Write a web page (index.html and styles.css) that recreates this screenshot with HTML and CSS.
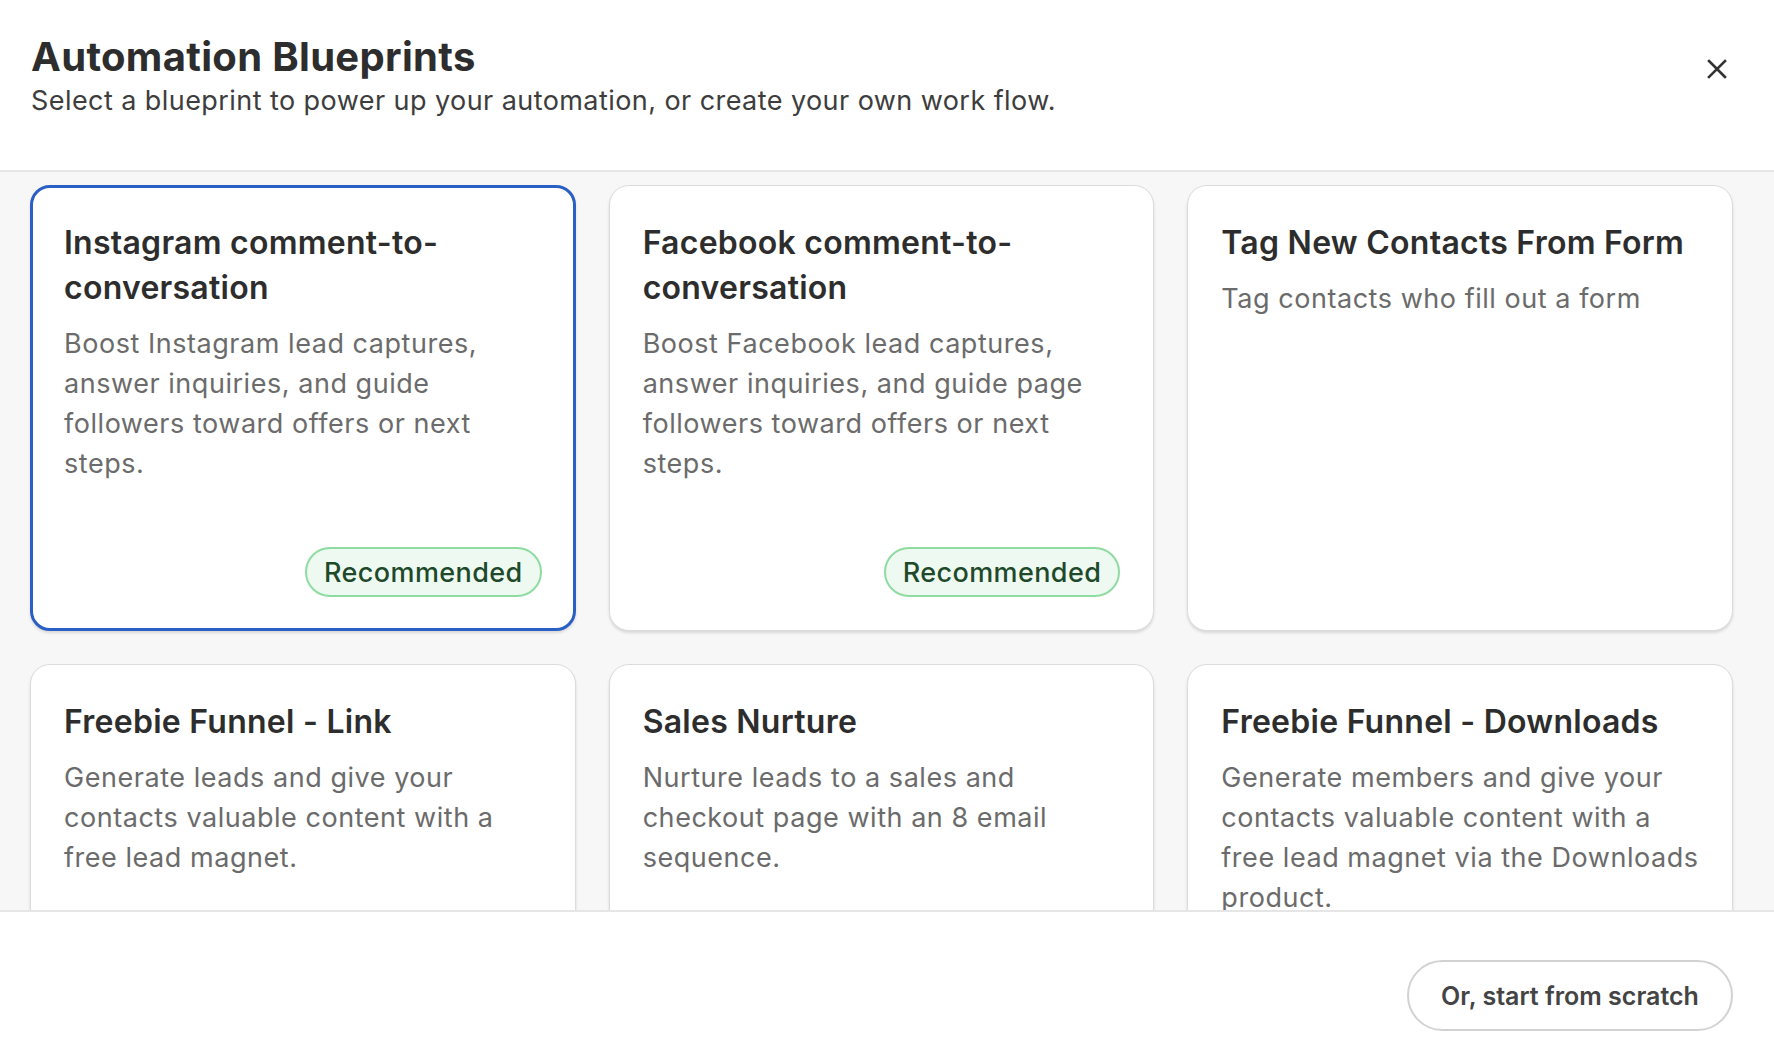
FILE: index.html
```html
<!DOCTYPE html>
<html lang="en">
<head>
<meta charset="utf-8">
<title>Automation Blueprints</title>
<link rel="stylesheet" href="styles.css">
</head>
<body>
<div class="modal">
  <header class="modal-header">
    <div class="heading">
      <h1 class="title">Automation Blueprints</h1>
      <p class="subtitle">Select a blueprint to power up your automation, or create your own work flow.</p>
    </div>
    <button class="close" aria-label="Close">
      <svg width="20" height="20" viewBox="0 0 20 20"><path d="M2 2 L18 18 M18 2 L2 18" stroke="#333" stroke-width="2.6" stroke-linecap="square"/></svg>
    </button>
  </header>
  <main class="modal-body">
    <div class="grid">
      <div class="card selected">
        <h2 class="card-title">Instagram comment-to-conversation</h2>
        <p class="card-desc">Boost Instagram lead captures, answer inquiries, and guide followers toward offers or next steps.</p>
        <span class="badge">Recommended</span>
      </div>
      <div class="card">
        <h2 class="card-title">Facebook comment-to-conversation</h2>
        <p class="card-desc">Boost Facebook lead captures, answer inquiries, and guide page followers toward offers or next steps.</p>
        <span class="badge">Recommended</span>
      </div>
      <div class="card">
        <h2 class="card-title">Tag New Contacts From Form</h2>
        <p class="card-desc">Tag contacts who fill out a form</p>
      </div>
      <div class="card">
        <h2 class="card-title">Freebie Funnel - Link</h2>
        <p class="card-desc">Generate leads and give your contacts valuable content with a free lead magnet.</p>
      </div>
      <div class="card">
        <h2 class="card-title">Sales Nurture</h2>
        <p class="card-desc">Nurture leads to a sales and checkout page with an 8 email sequence.</p>
      </div>
      <div class="card">
        <h2 class="card-title">Freebie Funnel - Downloads</h2>
        <p class="card-desc">Generate members and give your contacts valuable content with a free lead magnet via the Downloads product.</p>
      </div>
    </div>
  </main>
  <footer class="modal-footer">
    <button class="scratch">Or, start from scratch</button>
  </footer>
</div>
</body>
</html>
```

FILE: styles.css
```css
* { box-sizing: border-box; }
html, body { margin: 0; padding: 0; height: 100%; }
body {
  font-family: Inter, "Noto Sans", "Liberation Sans", sans-serif;
  background: #fff;
  color: #2d2d2d;
}
.modal {
  height: 1056px;
  display: flex;
  flex-direction: column;
  overflow: hidden;
}
.modal-header {
  height: 172px;
  flex: none;
  display: flex;
  justify-content: space-between;
  align-items: flex-start;
  padding: 34px 47px 0 31px;
  border-bottom: 2px solid #e6e6e6;
}
.title {
  margin: 0;
  font-size: 40px;
  line-height: 46px;
  font-weight: 700;
  letter-spacing: 0.008em;
  color: #2d2d2d;
}
.subtitle {
  margin: 5px 0 0;
  font-size: 27px;
  line-height: 32px;
  font-weight: 400;
  letter-spacing: 0.016em;
  color: #3d3d3d;
}
.close {
  margin-top: 25px;
  border: 0;
  background: none;
  padding: 0;
  width: 20px;
  height: 20px;
  cursor: pointer;
}
.close svg { display: block; }
.modal-body {
  flex: 1;
  min-height: 0;
  overflow: hidden;
  background: #f7f7f7;
  padding: 13px 41px 0 30px;
}
.grid {
  display: grid;
  grid-template-columns: repeat(3, 1fr);
  gap: 33px;
}
.card {
  min-height: 446px;
  background: #fff;
  border: 1px solid #dcdcdc;
  border-radius: 20px;
  box-shadow: 0 2px 3px rgba(0, 0, 0, 0.12);
  padding: 34px 31px 33px 33px;
  display: flex;
  flex-direction: column;
  align-items: flex-start;
}
.card.selected {
  border: 3px solid #2a5fc4;
  padding: 32px 29px 31px 31px;
}
.card-title {
  margin: 0;
  font-size: 32px;
  line-height: 45px;
  font-weight: 600;
  letter-spacing: 0.008em;
  color: #2d2d2d;
}
.card-desc {
  margin: 14px 0 0;
  font-size: 27px;
  line-height: 40px;
  letter-spacing: 0.02em;
  color: #6b6b6b;
}
.badge {
  margin-top: auto;
  align-self: flex-end;
  margin-right: 2px;
  height: 50px;
  padding: 0 17px;
  display: inline-flex;
  align-items: center;
  border: 2px solid #8fdca2;
  background: #eefaf1;
  border-radius: 25px;
  font-size: 27px;
  font-weight: 500;
  letter-spacing: 0.015em;
  color: #1e4a2b;
}
.modal-footer {
  flex: none;
  height: 146px;
  border-top: 2px solid #e6e6e6;
  display: flex;
  justify-content: flex-end;
  align-items: flex-start;
  padding: 48px 41px 0;
  background: #fff;
}
.scratch {
  height: 71px;
  width: 326px;
  border: 2px solid #d2d2d2;
  border-radius: 36px;
  background: #fff;
  font-family: Inter, "Noto Sans", sans-serif;
  font-size: 25px;
  font-weight: 600;
  letter-spacing: 0;
  color: #444;
  cursor: pointer;
}
```
